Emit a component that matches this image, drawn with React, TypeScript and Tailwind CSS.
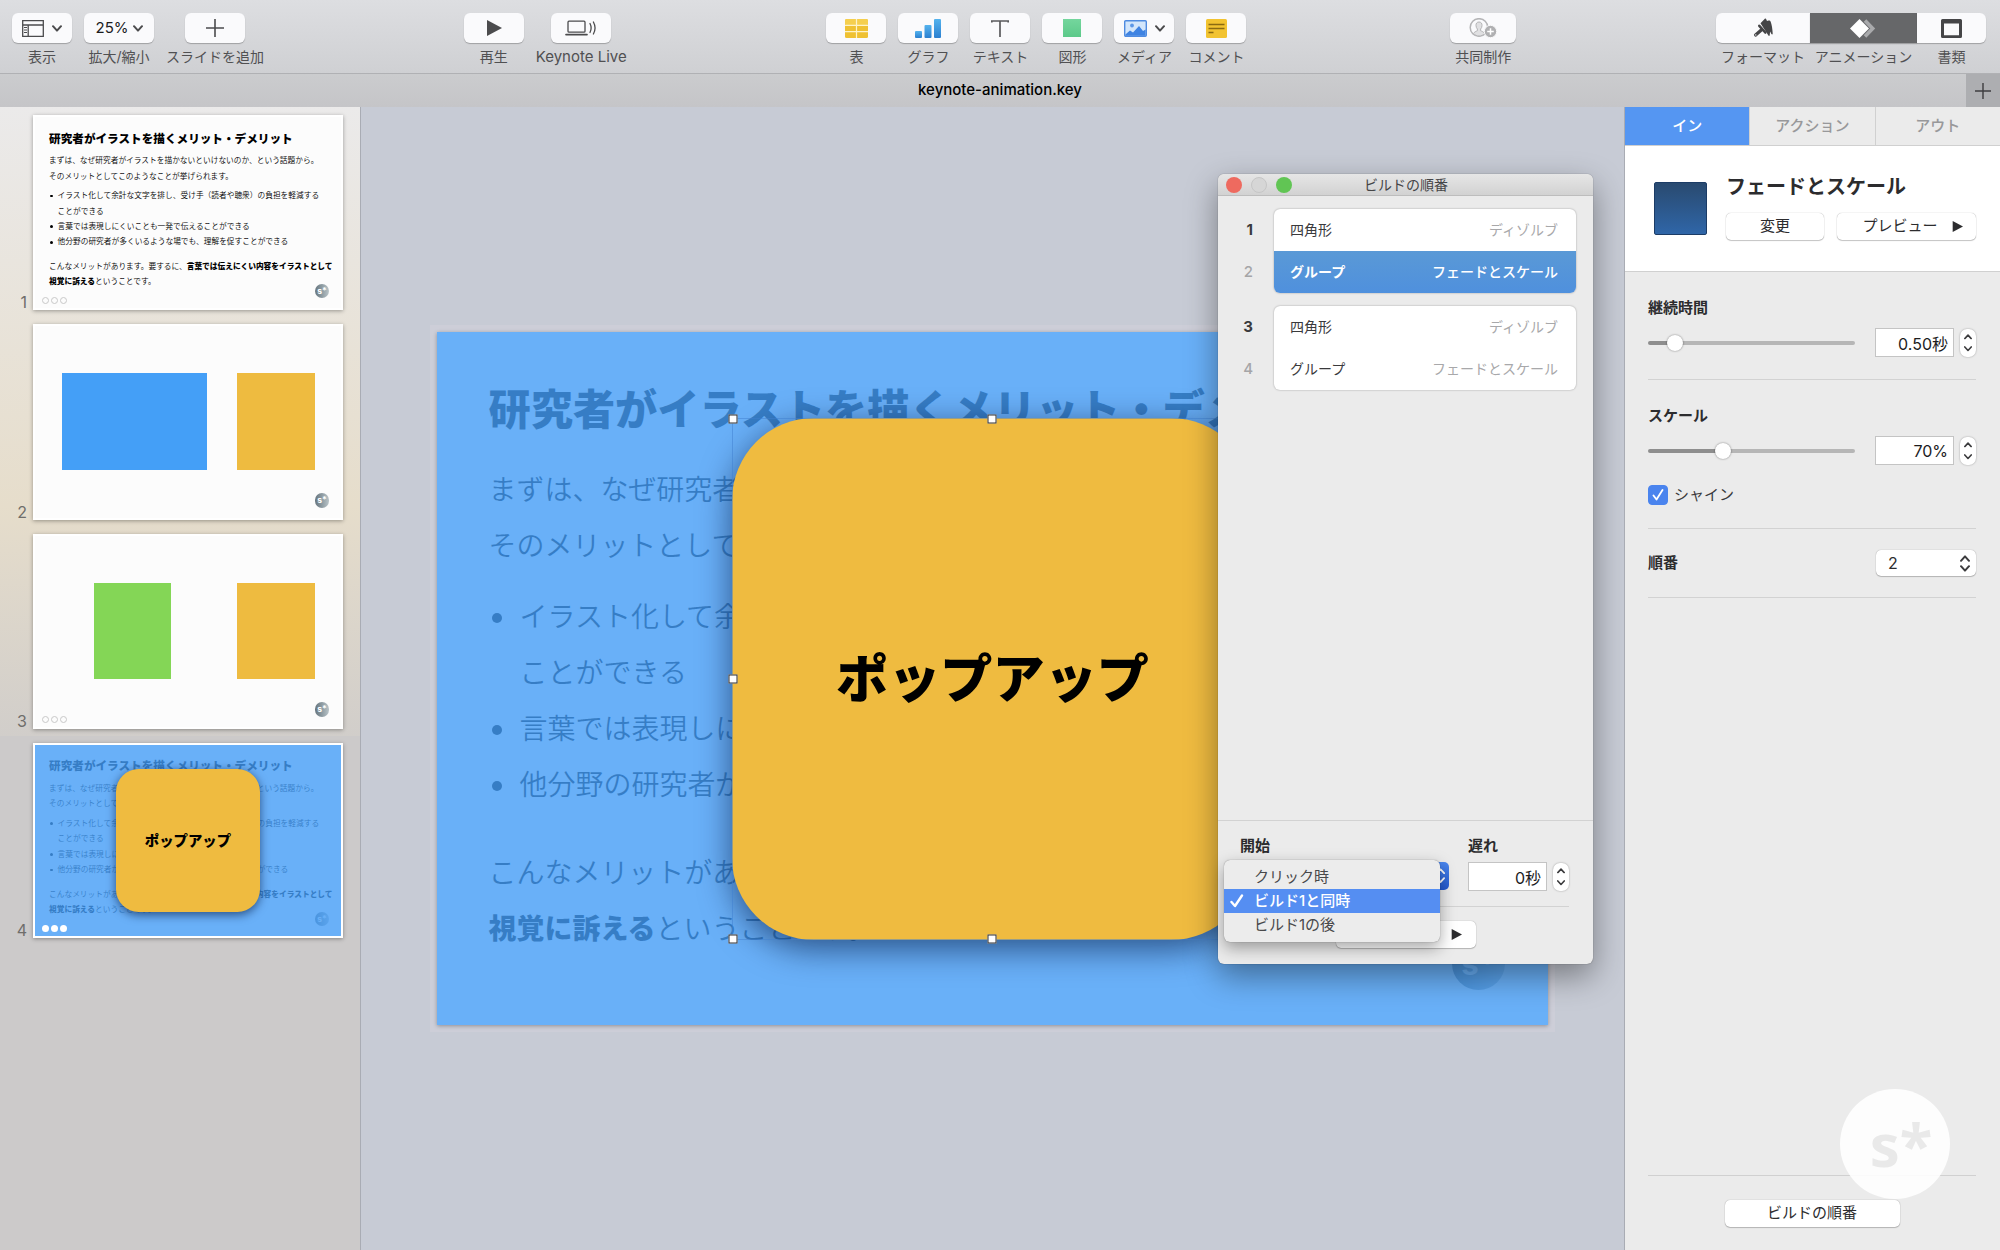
import { useState } from 'react';
import type { ReactNode } from 'react';
import { clsx } from 'clsx';

const Chevron = ({ className }: { className?: string }) => (
  <svg className={className} viewBox="0 0 10 7" fill="none" stroke="currentColor" strokeWidth="2">
    <path strokeLinecap="round" strokeLinejoin="round" d="M1 1.2 5 5.6 9 1.2" />
  </svg>
);

const PlayIcon = ({ className }: { className?: string }) => (
  <svg className={className} viewBox="0 0 16 16" fill="currentColor">
    <path d="M1 0 16 8 1 16z" />
  </svg>
);

const PlusIcon = ({ className }: { className?: string }) => (
  <svg className={className} viewBox="0 0 18 18" fill="none" stroke="currentColor" strokeWidth="1.6">
    <path d="M9 0v18M0 9h18" />
  </svg>
);

const ViewIcon = () => (
  <svg className="h-[17px] w-[22px]" viewBox="0 0 22 17" fill="none" stroke="#4b4b4d" strokeWidth="1.3">
    <path d="M.7.7h20.6v15.6H.7zM.7 5h20.6M6.2 5v11.3" />
    <path strokeWidth="1" d="M2 7.5h3M2 10h3M2 12.5h3" />
  </svg>
);

const LiveIcon = () => (
  <svg className="h-[16px] w-[32px]" viewBox="0 0 32 16" fill="none" stroke="#4b4b4d" strokeWidth="1.3" strokeLinecap="round">
    <rect x="3" y="1.2" width="17" height="11" rx="1" />
    <path strokeWidth="1.7" d="M1 14.6h21" />
    <path d="M25 3.5c1.3 2.6 1.3 6.4 0 9M28.4 2c2 3.6 2 8.4 0 12" />
  </svg>
);

const TableIcon = () => (
  <svg className="h-[19px] w-[23px]" viewBox="0 0 23 19">
    <rect width="23" height="19" rx="1.5" fill="#efc132" />
    <rect width="23" height="6" rx="1.5" fill="#f5cf4e" />
    <path stroke="#fdf3c8" strokeWidth="1.2" d="M11.5 0v19M0 6.3h23M0 12.6h23" />
  </svg>
);

const ChartIcon = () => (
  <svg className="h-[19px] w-[26px]" viewBox="0 0 26 19">
    <defs>
      <linearGradient id="bars" x1="0" y1="0" x2="0" y2="1">
        <stop offset="0" stopColor="#54b3ee" />
        <stop offset="1" stopColor="#2b7fd0" />
      </linearGradient>
    </defs>
    <rect y="12" width="7" height="7" rx="1" fill="url(#bars)" />
    <rect x="9.5" y="6" width="7" height="13" rx="1" fill="url(#bars)" />
    <rect x="19" width="7" height="19" rx="1" fill="url(#bars)" />
  </svg>
);

const TextIcon = () => (
  <svg className="h-[17px] w-[18px]" viewBox="0 0 18 17" fill="none" stroke="#5a5a5c" strokeWidth="1.7">
    <path d="M.8 2.5V1h16.4v1.5M9 1v16" />
  </svg>
);

const MediaIcon = () => (
  <svg className="h-[17px] w-[23px]" viewBox="0 0 23 17">
    <rect x=".7" y=".7" width="21.6" height="15.6" rx="1" fill="#d3e6fb" stroke="#4f8be0" strokeWidth="1.4" />
    <circle cx="8" cy="5.5" r="1.9" fill="#5c97e6" />
    <path fill="#3f83e2" d="M1.4 14.5 6 10.5l3 2 6-6.5 4 5 2.6-1.5v6.3H1.4z" />
  </svg>
);

const CommentIcon = () => (
  <svg className="h-[19px] w-[21px]" viewBox="0 0 21 19">
    <rect width="21" height="19" rx="1.5" fill="#f2c331" />
    <path stroke="#8a6a12" strokeWidth="1.3" d="M2.5 5.5h16M2.5 9.5h16M2.5 13.5h5" />
  </svg>
);

const CollabIcon = () => (
  <svg className="h-[20px] w-[28px]" viewBox="0 0 28 20" fill="none">
    <circle cx="10" cy="9.5" r="8.8" stroke="#b4b4b6" strokeWidth="1.5" />
    <path fill="#e0e0e2" stroke="#b4b4b6" d="M10 4c-2 0-3.2 1.4-3 3.6.1 1.6.6 2.6 1.4 3.4v1.7c-1.5.6-3 1.3-4 2.7 3 3.5 8.5 3.5 11.2 0-1-1.4-2.5-2.1-4-2.7V11c.8-.8 1.3-1.8 1.4-3.4C13.2 5.4 12 4 10 4z" />
    <circle cx="21.5" cy="13.5" r="6.2" fill="#b0b0b2" stroke="#f9f9fa" />
    <path stroke="#fff" strokeWidth="1.5" d="M21.5 10.2v6.6M18.2 13.5h6.6" />
  </svg>
);

const BrushIcon = () => (
  <svg className="h-[20px] w-[20px]" viewBox="0 0 20 20">
    <path fill="#454547" d="M7.5 5.2 11.6 1c.6-.6 1.3-.5 1.6.2l.8 1.9 1.6-.6c1-.2 1.7.3 2.1 1.3 1.1 3 1.8 7.2 2 11.7 0 1-.8 1.2-1.3.4l-1.3-2.5-.4 3.8c-.1.9-.9 1-1.3.4z" />
    <path stroke="#454547" strokeWidth="2.6" strokeLinecap="round" d="m6.3 7.8 6 6.7" />
    <path stroke="#454547" strokeWidth="3.2" strokeLinecap="round" d="m2.6 17 6-5.3" />
    <circle cx="2.8" cy="16.9" r=".7" fill="#fafafc" />
  </svg>
);

const AnimateIcon = () => (
  <svg className="h-[19px] w-[26px]" viewBox="0 0 26 19">
    <path fill="none" stroke="#a9aaac" strokeWidth="3.6" d="m15 1.5 7.7 8-7.7 8" />
    <path fill="#fff" d="m9.5 0 9.5 9.5L9.5 19 0 9.5z" />
  </svg>
);

const DocumentIcon = () => (
  <svg className="h-[19px] w-[21px]" viewBox="0 0 21 19">
    <path fill="#454547" fillRule="evenodd" d="M1.5 0h18Q21 0 21 1.5v16q0 1.5-1.5 1.5h-18Q0 19 0 17.5v-16Q0 0 1.5 0zM3 4.5v11.7h15V4.5z" />
  </svg>
);

type ToolProps = { label: string; pill?: string; caption?: string; children: ReactNode };

/* Toolbar button: white pill with a caption under it */
const Tool = ({ label, pill = 'w-15 rounded-md bg-[#fafafc]', caption = 'text-sm', children }: ToolProps) => (
  <button type="button" className="flex flex-col items-center">
    <span className={clsx('flex h-[30px] items-center justify-center gap-2 text-[#4b4b4d] shadow-[0_1px_1px_rgba(0,0,0,0.25)]', pill)}>
      {children}
    </span>
    <span className={clsx('mt-1 leading-5 whitespace-nowrap text-[#505052]', caption)}>{label}</span>
  </button>
);

const Toolbar = () => (
  <header className="flex h-[73px] items-start justify-between bg-linear-to-b from-[#dddee1] to-[#cfd0d3] pt-[13px] pr-[14px] pl-3">
    <div className="flex gap-3">
      <Tool label="表示">
        <ViewIcon />
        <Chevron className="w-[10px]" />
      </Tool>
      <Tool label="拡大/縮小" pill="w-[70px] rounded-md bg-[#fafafc]">
        <span className="-mr-1 text-[15px] text-[#1c1c1e]">25%</span>
        <Chevron className="w-[10px]" />
      </Tool>
      <Tool label="スライドを追加">
        <PlusIcon className="size-[18px]" />
      </Tool>
    </div>
    <div className="flex gap-3">
      <Tool label="再生">
        <PlayIcon className="size-[16px]" />
      </Tool>
      <Tool label="Keynote Live" caption="text-[15px]">
        <LiveIcon />
      </Tool>
    </div>
    <div className="flex gap-3 pr-1">
      <Tool label="表">
        <TableIcon />
      </Tool>
      <Tool label="グラフ">
        <ChartIcon />
      </Tool>
      <Tool label="テキスト">
        <TextIcon />
      </Tool>
      <Tool label="図形">
        <span className="size-[18px] bg-linear-to-b from-[#74d69d] to-[#5cc98a]" />
      </Tool>
      <Tool label="メディア">
        <MediaIcon />
        <Chevron className="w-[10px]" />
      </Tool>
      <Tool label="コメント">
        <CommentIcon />
      </Tool>
    </div>
    <Tool label="共同制作" pill="w-[66px] rounded-md bg-[#fafafc]">
      <CollabIcon />
    </Tool>
    <div className="flex">
      <Tool label="フォーマット" pill="w-[94px] rounded-l-md bg-[#fafafc]">
        <BrushIcon />
      </Tool>
      <Tool label="アニメーション" pill="w-[107px] bg-[#666769]">
        <AnimateIcon />
      </Tool>
      <Tool label="書類" pill="w-[69px] rounded-r-md bg-[#fafafc]">
        <DocumentIcon />
      </Tool>
    </div>
  </header>
);

const TabBar = () => (
  <div className="flex h-[34px] border-t border-[#b0b1b4] bg-linear-to-b from-[#cbccce] to-[#c5c5c8]">
    <div className="w-[34px]" />
    <h1 className="flex flex-1 items-center justify-center text-[15px] font-medium text-black">keynote-animation.key</h1>
    <button type="button" aria-label="新規タブ" className="flex w-[34px] items-center justify-center bg-[#adaeb1] text-[#3e3e40]">
      <PlusIcon className="size-4" />
    </button>
  </div>
);

/* Slides are sized in cqw, so thumbnails and the canvas share the same markup */
const Slide = ({ children }: { children: ReactNode }) => (
  <div className="@container relative aspect-[16/10] w-full overflow-hidden bg-[#fcfcfc]">{children}</div>
);

const SlideLogo = () => (
  <div className="absolute right-[3.8cqw] bottom-[3.2cqw] flex size-[4.8cqw] items-center justify-center rounded-full bg-linear-to-r from-[#66757e] to-[#b9c4c8] text-[2.8cqw] leading-none font-bold text-white">
    s*
  </div>
);

const SlideBullet = ({ children }: { children: ReactNode }) => (
  <li className="flex">
    <span className="mt-[2.1cqw] mr-[1.6cqw] ml-[0.3cqw] size-[0.9cqw] shrink-0 rounded-full bg-black" />
    <span>{children}</span>
  </li>
);

const MeritSlide = () => (
  <>
    <div className="pt-[4.1cqw] pl-[4.6cqw] text-[2.52cqw] leading-[5.04cqw] font-[350] whitespace-nowrap text-black">
      <h2 className="text-[3.8cqw] leading-[6cqw] font-black">研究者がイラストを描くメリット・デメリット</h2>
      <p className="mt-[1.7cqw]">
        まずは、なぜ研究者がイラストを描かないといけないのか、という話題から。
        <br />
        そのメリットとしてこのようなことが挙げられます。
      </p>
      <ul className="mt-[1.4cqw]">
        <SlideBullet>
          イラスト化して余計な文字を排し、受け手（読者や聴衆）の負担を軽減する
          <br />
          ことができる
        </SlideBullet>
        <SlideBullet>言葉では表現しにくいことも一発で伝えることができる</SlideBullet>
        <SlideBullet>他分野の研究者が多くいるような場でも、理解を促すことができる</SlideBullet>
      </ul>
      <p className="mt-[2.9cqw]">
        こんなメリットがあります。要するに、<b className="font-black">言葉では伝えにくい内容をイラストとして</b>
        <br />
        <b className="font-black">視覚に訴える</b>ということです。
      </p>
    </div>
    <SlideLogo />
  </>
);

const Handle = ({ className }: { className: string }) => (
  <span className={clsx('absolute size-[9px] -translate-1/2 border border-[#2c2c2e] bg-white', className)} />
);

const PopupSlide = ({ selected = false }: { selected?: boolean }) => (
  <>
    <MeritSlide />
    <div className="absolute inset-0 bg-[#439cf6]/80" />
    <div className="absolute top-[7.8cqw] left-[26.5cqw] size-[47cqw]">
      <div className="flex size-full items-center justify-center rounded-[7.4cqw] bg-[#efbb40] text-[4.7cqw] font-black text-black shadow-[0_0.8cqw_3cqw_rgba(0,20,60,0.6)]">
        ポップアップ
      </div>
      {selected && (
        <div className="absolute inset-0 border border-[#3f7fd0]/50">
          <Handle className="top-0 left-0" />
          <Handle className="top-0 left-1/2" />
          <Handle className="top-0 left-full" />
          <Handle className="top-1/2 left-0" />
          <Handle className="top-1/2 left-full" />
          <Handle className="top-full left-0" />
          <Handle className="top-full left-1/2" />
          <Handle className="top-full left-full" />
        </div>
      )}
    </div>
  </>
);

const slides = [
  { dots: 'border border-[#c8c8c8]', content: <MeritSlide /> },
  {
    dots: '',
    content: (
      <>
        <div className="absolute top-[15.4cqw] left-[8.9cqw] h-[31.6cqw] w-[47.4cqw] bg-[#449ff7]" />
        <div className="absolute top-[15.4cqw] left-[66cqw] h-[31.6cqw] w-[25.4cqw] bg-[#eebb40]" />
        <SlideLogo />
      </>
    ),
  },
  {
    dots: 'border border-[#c8c8c8]',
    content: (
      <>
        <div className="absolute top-[15.4cqw] left-[19.2cqw] h-[31.6cqw] w-[25.4cqw] bg-[#84d656]" />
        <div className="absolute top-[15.4cqw] left-[66cqw] h-[31.6cqw] w-[25.4cqw] bg-[#eebb40]" />
        <SlideLogo />
      </>
    ),
  },
  { dots: 'bg-white', content: <PopupSlide /> },
];

const SlideNavigator = () => (
  <nav className="w-[361px] shrink-0 border-r border-[#a9acb4] bg-linear-to-b from-[#ebeaea] via-[#e6ddcb] via-35% to-[#cccaca] to-60% pt-px">
    <ol>
      {slides.map((slide, i) => (
        <li key={i} className={clsx('flex items-end py-[7px] pr-[17px]', i === 3 && 'bg-[#cccaca]')}>
          <span className="w-[27px] text-right text-base leading-4 text-[#6f6d6a]">{i + 1}</span>
          <div className="relative ml-[6px] flex-1 border-2 border-white shadow-[0_1px_4px_rgba(0,0,0,0.35)]">
            <Slide>{slide.content}</Slide>
            {slide.dots && (
              <div className="absolute bottom-[4px] left-[7px] flex gap-[2px]">
                <span className={clsx('size-[7px] rounded-full', slide.dots)} />
                <span className={clsx('size-[7px] rounded-full', slide.dots)} />
                <span className={clsx('size-[7px] rounded-full', slide.dots)} />
              </div>
            )}
          </div>
        </li>
      ))}
    </ol>
  </nav>
);

const NumberField = ({ label, value }: { label: string; value: string }) => (
  <div className="flex items-center gap-[6px]">
    <input
      aria-label={label}
      defaultValue={value}
      className="h-[29px] w-[79px] border border-[#c4c4c4] bg-white pr-[5px] text-right text-base text-[#1c1c1e]"
    />
    <div className="flex h-7 w-4 flex-col items-center justify-between rounded-[7px] bg-white py-[5px] text-[#3c3c3e] shadow-[0_0_2px_rgba(0,0,0,0.35)]">
      <button type="button" aria-label={`${label}を増やす`}>
        <Chevron className="w-2 rotate-180" />
      </button>
      <button type="button" aria-label={`${label}を減らす`}>
        <Chevron className="w-2" />
      </button>
    </div>
  </div>
);

const PushButton = ({ className, children }: { className?: string; children: ReactNode }) => (
  <button
    type="button"
    className={clsx('flex h-[27px] items-center justify-center rounded-[5px] bg-white text-[15px] text-[#2c2c2e] shadow-[0_0_1px_rgba(0,0,0,0.4),0_1px_1px_rgba(0,0,0,0.2)]', className)}>
    {children}
  </button>
);

const builds = [
  [
    { name: '四角形', effect: 'ディゾルブ' },
    { name: 'グループ', effect: 'フェードとスケール' },
  ],
  [
    { name: '四角形', effect: 'ディゾルブ' },
    { name: 'グループ', effect: 'フェードとスケール' },
  ],
];

const startOptions = ['クリック時', 'ビルド1と同時', 'ビルド1の後'];

const BuildOrderWindow = () => {
  const [start, setStart] = useState(startOptions[1]);

  return (
    <section className="absolute top-[67px] right-[31px] flex h-[790px] w-[375px] flex-col rounded-md bg-[#ebebeb] shadow-[0_0_1px_rgba(0,0,0,0.6),0_12px_32px_rgba(0,0,0,0.4)]">
      <div className="flex h-[22px] shrink-0 items-center gap-[9px] rounded-t-md border-b border-[#bdbdbd] bg-linear-to-b from-[#e6e6e6] to-[#d2d2d2] px-2">
        <button type="button" aria-label="閉じる" className="size-4 rounded-full bg-[#ee6a5f]" />
        <button type="button" aria-label="しまう" className="size-4 rounded-full border border-[#c6c6c6] bg-[#d6d6d6]" />
        <button type="button" aria-label="拡大" className="size-4 rounded-full bg-[#61c554]" />
        <h2 className="mr-[74px] flex-1 text-center text-sm leading-5 text-[#454547]">ビルドの順番</h2>
      </div>

      <div className="flex flex-1 flex-col gap-[13px] pt-[13px] pr-[17px]">
        {builds.map((group, g) => (
          <div key={g} className="flex">
            <div className="w-14 pr-[21px] text-right text-[15px] leading-[42px]">
              <div className="font-bold text-[#3a3a3c]">{g * 2 + 1}</div>
              <div className="font-medium text-[#a5a5a7]">{g * 2 + 2}</div>
            </div>
            <ul className="flex-1 overflow-hidden rounded-md bg-white text-sm leading-[42px] shadow-[0_0_2px_rgba(0,0,0,0.35)]">
              {group.map((build, i) => {
                const active = g === 0 && i === 1;
                return (
                  <li
                    key={i}
                    className={clsx(
                      'flex justify-between pr-[18px] pl-4',
                      active ? 'bg-linear-to-b from-[#5a99d6] to-[#4f90dd] font-bold text-white' : 'text-[#3a3a3c]'
                    )}>
                    <span>{build.name}</span>
                    <span className={active ? 'font-medium' : 'text-[#a8a8aa]'}>{build.effect}</span>
                  </li>
                );
              })}
            </ul>
          </div>
        ))}
      </div>

      <div className="border-t border-[#d2d2d2] pt-[15px] pr-6 pb-4 pl-[22px]">
        <div className="flex justify-between border-b border-[#d2d2d2] pb-[15px]">
          <div className="relative w-[209px]">
            <label htmlFor="start" className="block text-[15px] leading-5 font-bold text-[#2c2c2e]">
              開始
            </label>
            <div className="relative mt-[6px]">
              <select
                id="start"
                value={start}
                onChange={(e) => setStart(e.target.value)}
                className="block h-7 w-full appearance-none rounded-[5px] bg-linear-to-b from-[#4a86ee] to-[#2459d0] text-[15px] text-transparent">
                {startOptions.map((option) => (
                  <option key={option}>{option}</option>
                ))}
              </select>
              <div className="pointer-events-none absolute top-[6px] right-1 flex flex-col gap-[3px] text-white">
                <Chevron className="w-[9px] rotate-180" />
                <Chevron className="w-[9px]" />
              </div>
            </div>
            {/* open menu, drawn over the select */}
            <ul
              role="listbox"
              aria-label="開始"
              className="absolute top-6 left-[-16px] w-[216px] rounded-md bg-[#ececec] py-[5px] text-[15px] leading-6 text-[#48484a] shadow-[0_0_1px_rgba(0,0,0,0.5),0_6px_16px_rgba(0,0,0,0.35)]">
              {startOptions.map((option) => (
                <li
                  key={option}
                  role="option"
                  aria-selected={option === start}
                  onClick={() => setStart(option)}
                  className={clsx('flex items-center', option === start && 'bg-[#558ef2] font-medium text-white')}>
                  <span className="flex w-[30px] justify-center pr-1">
                    {option === start && (
                      <svg className="size-[14px]" viewBox="0 0 14 14" fill="none" stroke="currentColor" strokeWidth="2.4">
                        <path strokeLinecap="round" strokeLinejoin="round" d="M1.5 8 5 12 12 1.5" />
                      </svg>
                    )}
                  </span>
                  {option}
                </li>
              ))}
            </ul>
          </div>
          <div className="w-[101px]">
            <div className="mb-[6px] text-[15px] leading-5 font-bold text-[#2c2c2e]">遅れ</div>
            <NumberField label="遅れ" value="0秒" />
          </div>
        </div>
        <PushButton className="mt-[14px] ml-24 w-[140px] gap-[14px] pl-3">
          プレビュー
          <PlayIcon className="size-[11px]" />
        </PushButton>
      </div>
    </section>
  );
};

const Canvas = () => (
  <main className="relative flex min-w-0 flex-1 items-center justify-center bg-[#c7cbd5]">
    <div className="w-[89%] bg-[#cdced8] p-[7px]">
      <div className="shadow-[0_1px_4px_rgba(0,0,0,0.3)]">
        <Slide>
          <PopupSlide selected />
        </Slide>
      </div>
    </div>
    <BuildOrderWindow />
  </main>
);

const SliderRow = ({ id, label, percent, value }: { id: string; label: string; percent: number; value: string }) => {
  const [pos, setPos] = useState(percent);

  return (
    <>
      <label htmlFor={id} className="block text-[15px] leading-5 font-bold text-[#2c2c2e]">
        {label}
      </label>
      <div className="mt-[10px] flex items-center justify-between">
        <input
          id={id}
          type="range"
          min={0}
          max={100}
          value={pos}
          onChange={(e) => setPos(Number(e.target.value))}
          style={{ backgroundImage: `linear-gradient(to right, #8e8e8e ${pos}%, #b6b6b6 ${pos}%)` }}
          className="h-1 w-[207px] appearance-none rounded-full [&::-webkit-slider-thumb]:size-4 [&::-webkit-slider-thumb]:appearance-none [&::-webkit-slider-thumb]:rounded-full [&::-webkit-slider-thumb]:bg-white [&::-webkit-slider-thumb]:shadow-[0_0_2px_rgba(0,0,0,0.5)]"
        />
        <NumberField label={label} value={value} />
      </div>
    </>
  );
};

const tabs = ['イン', 'アクション', 'アウト'];

const Inspector = () => {
  const [tab, setTab] = useState('イン');

  return (
    <aside className="relative flex w-[376px] shrink-0 flex-col border-l border-[#a9acb4] bg-[#ebebeb]">
      <div className="flex h-[39px] border-b border-[#d0d0d0]">
        {tabs.map((name) => (
          <button
            key={name}
            type="button"
            onClick={() => setTab(name)}
            className={clsx(
              'flex-1 border-r border-[#d0d0d0] text-[15px] font-medium last:border-r-0',
              tab === name ? 'bg-[#5596f2] font-bold text-white' : 'text-[#98989a]'
            )}>
            {name}
          </button>
        ))}
      </div>

      <div className="flex h-[126px] gap-[19px] border-b border-[#d0d0d0] bg-white pt-[26px] pr-6 pl-[29px]">
        <div className="mt-[10px] size-[53px] shrink-0 rounded-xs border border-[#1c3c66] bg-linear-to-b from-[#294a70] to-[#2f66a8]" />
        <div className="flex-1">
          <h2 className="text-xl leading-[30px] font-bold text-[#2c2c2e]">フェードとスケール</h2>
          <div className="mt-[11px] flex gap-[13px]">
            <PushButton className="w-[98px]">変更</PushButton>
            <PushButton className="flex-1 gap-[14px] pl-3">
              プレビュー
              <PlayIcon className="size-[11px]" />
            </PushButton>
          </div>
        </div>
      </div>

      <div className="flex flex-1 flex-col pr-6 pb-[23px] pl-[23px]">
        <div className="border-b border-[#d2d2d2] pt-[26px] pb-[22px]">
          <SliderRow id="duration" label="継続時間" percent={10} value="0.50秒" />
        </div>
        <div className="border-b border-[#d2d2d2] pt-[26px] pb-[23px]">
          <SliderRow id="scale" label="スケール" percent={35} value="70%" />
          <label className="mt-5 flex items-center gap-[6px] text-[15px] leading-5 text-[#3a3a3c]">
            <span className="relative flex size-5">
              <input type="checkbox" defaultChecked className="peer size-5 appearance-none rounded-[4px] border border-[#c4c4c4] bg-white checked:border-[#4a84ee] checked:bg-[#4a84ee]" />
              <svg
                className="pointer-events-none absolute inset-1 hidden size-3 text-white peer-checked:block"
                viewBox="0 0 12 12"
                fill="none"
                stroke="currentColor"
                strokeWidth="1.8">
                <path strokeLinecap="round" strokeLinejoin="round" d="M1.5 6.5 4.5 10.5 10.5 1" />
              </svg>
            </span>
            シャイン
          </label>
        </div>
        <div className="flex items-center justify-between border-b border-[#d2d2d2] py-[21px]">
          <label htmlFor="order" className="text-[15px] leading-5 font-bold text-[#2c2c2e]">
            順番
          </label>
          <div className="relative w-[100px]">
            <select
              id="order"
              defaultValue="2"
              className="block h-[26px] w-full appearance-none rounded-[5px] bg-white pl-3 text-base text-[#2c2c2e] shadow-[0_0_1px_rgba(0,0,0,0.4),0_1px_1px_rgba(0,0,0,0.2)]">
              <option>1</option>
              <option>2</option>
              <option>3</option>
              <option>4</option>
            </select>
            <div className="pointer-events-none absolute top-[5px] right-[6px] flex flex-col gap-[3px] text-[#3c3c3e]">
              <Chevron className="w-[10px] rotate-180" />
              <Chevron className="w-[10px]" />
            </div>
          </div>
        </div>
        <div className="mt-auto flex justify-center border-t border-[#d0d0d0] pt-6">
          <PushButton className="w-[175px]">ビルドの順番</PushButton>
        </div>
      </div>

      <div className="absolute right-[50px] bottom-[51px] flex size-[110px] items-center justify-center rounded-full bg-white/90 pl-3 font-['Noto_Sans',sans-serif] text-6xl leading-none font-bold text-[#e9e9e9]">
        s*
      </div>
    </aside>
  );
};

const App = () => (
  <div className="flex h-screen flex-col overflow-hidden font-['Inter','Noto_Sans_CJK_JP',sans-serif]">
    <Toolbar />
    <TabBar />
    <div className="flex min-h-0 flex-1">
      <SlideNavigator />
      <Canvas />
      <Inspector />
    </div>
  </div>
);

export default App;
